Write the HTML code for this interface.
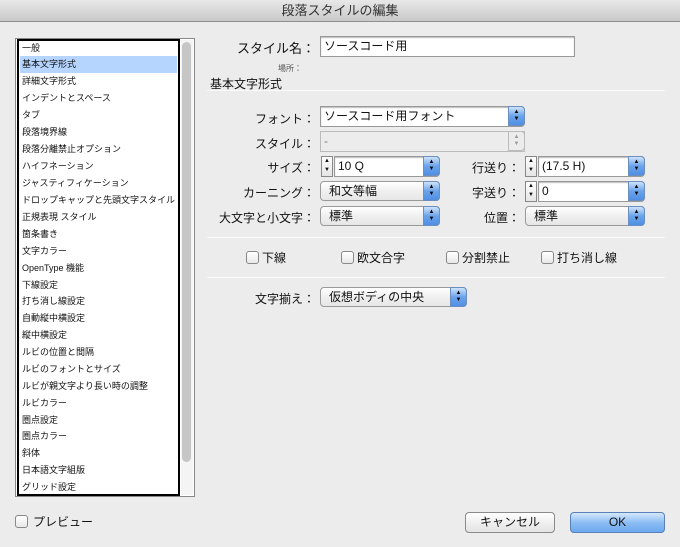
<!DOCTYPE html>
<html><head><meta charset="utf-8"><style>
*{box-sizing:border-box;margin:0;padding:0}
body{width:680px;height:547px;background:#ececec;font-family:"Liberation Sans","Noto Sans CJK JP",sans-serif;position:relative;overflow:hidden;color:#111}
.a{position:absolute}
.title{left:0;top:0;width:680px;height:22px;background:linear-gradient(#e8e8e8,#c9c9c9);border-bottom:1px solid #8e8e8e;text-align:center;font-size:13px;line-height:22px;color:#333}
.list{left:15px;top:38px;width:180px;height:459px;border:1px solid #888;background:#fff}
.inner{left:17px;top:39px;width:163px;height:457px;border:2px solid #000;background:#fff}
.sb{left:181px;top:40px;width:12px;height:455px;background:#f4f4f4}
.thumb{left:182px;top:42px;width:9px;height:420px;background:#c6c6c6;border-radius:5px}
.it{left:20px;width:157px;height:17px;font-size:9px;line-height:17px;padding-left:2px;white-space:nowrap;overflow:hidden}
.sel{background:#b5d5ff}
.lbl{font-size:12px;text-align:right;width:120px}
.fld{background:#fff;border:1px solid #999;box-shadow:inset 0 1px 1px #bbb;font-size:12px;padding-left:3px;height:21px;line-height:19px}
.pop{background:linear-gradient(#fff,#f0f0f0 50%,#e6e6e6);border:1px solid #9a9a9a;border-radius:4px;font-size:12px;padding-left:8px;height:20px;line-height:18px}
.arr{position:absolute;right:-1px;top:-1px;width:17px;height:20px;border-radius:0 4px 4px 0;background:linear-gradient(#cfe3fb,#6aa3ea 50%,#4f8fe4);border:1px solid #6a8fc0;color:#000;font-size:6px;line-height:7px;text-align:center;padding-top:2px}
.step{width:12px;height:21px;border:1px solid #888;background:linear-gradient(#fff,#e5e5e5);font-size:6px;line-height:9px;text-align:center}
.cb{width:13px;height:13px;border:1px solid #888;border-radius:3px;background:linear-gradient(#fff,#e8e8e8)}
.ct{font-size:12px}
.hr{height:1px;background:#999;border-bottom:1px solid #fafafa}
.btn{height:21px;border:1px solid #8a8a8a;border-radius:4px;background:linear-gradient(#fff,#f0f0f0 50%,#e3e3e3);text-align:center;font-size:12px;line-height:19px}
</style></head><body>
<div class="a title">段落スタイルの編集</div>
<div class="a list"></div><div class="a inner"></div>
<div class="a sb"></div><div class="a thumb"></div>
<div class="a it" style="top:40px">一般</div>
<div class="a it sel" style="top:56px">基本文字形式</div>
<div class="a it" style="top:73px">詳細文字形式</div>
<div class="a it" style="top:90px">インデントとスペース</div>
<div class="a it" style="top:107px">タブ</div>
<div class="a it" style="top:124px">段落境界線</div>
<div class="a it" style="top:141px">段落分離禁止オプション</div>
<div class="a it" style="top:158px">ハイフネーション</div>
<div class="a it" style="top:175px">ジャスティフィケーション</div>
<div class="a it" style="top:192px">ドロップキャップと先頭文字スタイル</div>
<div class="a it" style="top:209px">正規表現 スタイル</div>
<div class="a it" style="top:226px">箇条書き</div>
<div class="a it" style="top:243px">文字カラー</div>
<div class="a it" style="top:260px">OpenType 機能</div>
<div class="a it" style="top:277px">下線設定</div>
<div class="a it" style="top:293px">打ち消し線設定</div>
<div class="a it" style="top:310px">自動縦中横設定</div>
<div class="a it" style="top:327px">縦中横設定</div>
<div class="a it" style="top:344px">ルビの位置と間隔</div>
<div class="a it" style="top:361px">ルビのフォントとサイズ</div>
<div class="a it" style="top:378px">ルビが親文字より長い時の調整</div>
<div class="a it" style="top:395px">ルビカラー</div>
<div class="a it" style="top:412px">圏点設定</div>
<div class="a it" style="top:428px">圏点カラー</div>
<div class="a it" style="top:445px">斜体</div>
<div class="a it" style="top:462px">日本語文字組版</div>
<div class="a it" style="top:479px">グリッド設定</div>

<div class="a lbl" style="left:195px;top:38px;font-size:13px">スタイル名：</div>
<div class="a fld" style="left:320px;top:36px;width:255px">ソースコード用</div>
<div class="a" style="left:278px;top:63px;font-size:8px;color:#555">場所：</div>
<div class="a" style="left:210px;top:75px;font-size:12px">基本文字形式</div>
<div class="a hr" style="left:207px;top:90px;width:458px"></div>

<div class="a lbl" style="left:195px;top:110px">フォント：</div>
<div class="a fld" style="left:320px;top:106px;width:205px;border-radius:0 4px 4px 0">ソースコード用フォント<div class="arr">▲<br>▼</div></div>
<div class="a lbl" style="left:195px;top:135px">スタイル：</div>
<div class="a fld" style="left:320px;top:131px;width:205px;background:#ececec;color:#777;border-color:#bbb;box-shadow:none">-<div class="arr" style="background:#ececec;border-color:#bbb;color:#999">▲<br>▼</div></div>

<div class="a lbl" style="left:195px;top:159px">サイズ：</div>
<div class="a step" style="left:321px;top:156px">▲<br>▼</div>
<div class="a fld" style="left:334px;top:156px;width:106px;border-radius:0 4px 4px 0">10 Q<div class="arr">▲<br>▼</div></div>
<div class="a lbl" style="left:400px;top:159px">行送り：</div>
<div class="a step" style="left:525px;top:156px">▲<br>▼</div>
<div class="a fld" style="left:538px;top:156px;width:107px;border-radius:0 4px 4px 0">(17.5 H)<div class="arr">▲<br>▼</div></div>

<div class="a lbl" style="left:195px;top:184px">カーニング：</div>
<div class="a pop" style="left:320px;top:181px;width:120px">和文等幅<div class="arr">▲<br>▼</div></div>
<div class="a lbl" style="left:400px;top:184px">字送り：</div>
<div class="a step" style="left:525px;top:181px">▲<br>▼</div>
<div class="a fld" style="left:538px;top:181px;width:107px;border-radius:0 4px 4px 0">0<div class="arr">▲<br>▼</div></div>

<div class="a lbl" style="left:195px;top:209px">大文字と小文字：</div>
<div class="a pop" style="left:320px;top:206px;width:120px">標準<div class="arr">▲<br>▼</div></div>
<div class="a lbl" style="left:400px;top:209px">位置：</div>
<div class="a pop" style="left:525px;top:206px;width:120px">標準<div class="arr">▲<br>▼</div></div>

<div class="a hr" style="left:207px;top:237px;width:458px"></div>
<div class="a cb" style="left:246px;top:251px"></div><div class="a ct" style="left:262px;top:249px">下線</div>
<div class="a cb" style="left:341px;top:251px"></div><div class="a ct" style="left:357px;top:249px">欧文合字</div>
<div class="a cb" style="left:446px;top:251px"></div><div class="a ct" style="left:462px;top:249px">分割禁止</div>
<div class="a cb" style="left:541px;top:251px"></div><div class="a ct" style="left:557px;top:249px">打ち消し線</div>
<div class="a hr" style="left:207px;top:277px;width:458px"></div>

<div class="a lbl" style="left:195px;top:290px">文字揃え：</div>
<div class="a pop" style="left:320px;top:287px;width:147px">仮想ボディの中央<div class="arr">▲<br>▼</div></div>

<div class="a cb" style="left:15px;top:515px"></div><div class="a ct" style="left:33px;top:513px">プレビュー</div>
<div class="a btn" style="left:465px;top:512px;width:90px">キャンセル</div>
<div class="a btn" style="left:570px;top:512px;width:95px;background:linear-gradient(#d5e8fc,#8dbdf3 50%,#6ba9ef);border-color:#5a80b8">OK</div>
</body></html>
